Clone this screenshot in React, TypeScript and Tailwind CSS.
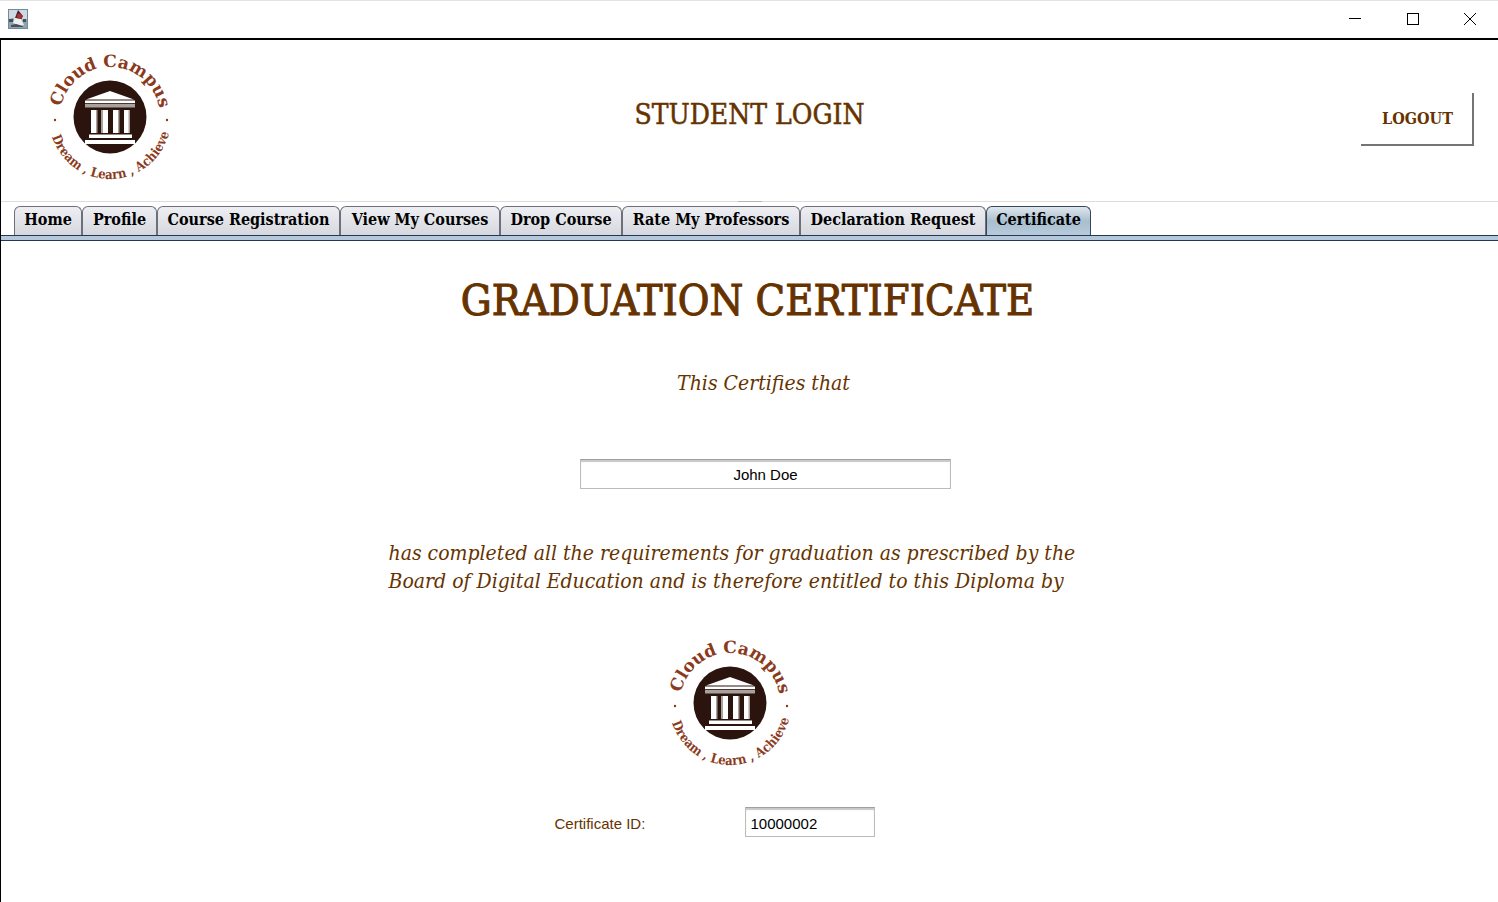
import React, { useId } from "react";

const serif = "font-['DejaVu_Serif_Condensed','DejaVu_Serif',serif]";

const tabs = [
  { label: "Home", width: "w-[68px]" },
  { label: "Profile", width: "w-[75px]" },
  { label: "Course Registration", width: "w-[183px]" },
  { label: "View My Courses", width: "w-[160px]" },
  { label: "Drop Course", width: "w-[122px]" },
  { label: "Rate My Professors", width: "w-[178px]" },
  { label: "Declaration Request", width: "w-[186px]" },
  { label: "Certificate", width: "w-[105px]" },
];

function CampusLogo() {
  const id = useId();
  const top = `${id}-top`;
  const bottom = `${id}-bottom`;
  return (
    <svg viewBox="0 0 140 140" className="size-[140px] shrink-0" role="img" aria-label="Cloud Campus">
      <defs>
        <path id={top} d="M 20 70 A 50 50 0 0 1 120 70" />
        <path id={bottom} d="M 9 71 A 61 61 0 0 0 131 71" />
      </defs>
      <text fill="#8b3a1c" textAnchor="middle" className="font-['DejaVu_Serif',serif] text-[17px] font-bold">
        <textPath href={`#${top}`} startOffset="50.5%">Cloud Campus</textPath>
      </text>
      <text fill="#8b3a1c" textAnchor="middle" className="font-['DejaVu_Serif_Condensed','DejaVu_Serif',serif] text-[13px] font-bold">
        <textPath href={`#${bottom}`} startOffset="51%">Dream , Learn , Achieve</textPath>
      </text>
      <circle cx="15" cy="73" r="1.2" fill="#8b3a1c" />
      <circle cx="127" cy="73" r="1.2" fill="#8b3a1c" />
      <circle cx="70" cy="70" r="36.5" fill="#2b140d" />
      <path d="M70 44 L94 52.500 H46 Z" fill="#fff" />
      <path d="M45 53.500 H95 V56 H45 Z" fill="#fff" />
      <path d="M45 56.800 H95 V60.500 H45 Z" fill="#aaa09c" />
      <path d="M51 63 H57 V86 H51 Z M62 63 H68 V86 H62 Z M73 63 H79 V86 H73 Z M84 63 H90 V86 H84 Z" fill="#fff" />
      <path d="M56 63 H57.500 V86 H56 Z M61 63 H63 V86 H61 Z M78 63 H79.500 V86 H78 Z M88.500 63 H90 V86 H88.500 Z" fill="#aaa09c" />
      <path d="M49 87.500 H92 V91 H49 Z M45 93 H95 V97 H45 Z" fill="#fff" />
    </svg>
  );
}

function AppIcon() {
  return (
    <svg viewBox="0 0 20 20" className="size-5" aria-hidden="true">
      <rect width="20" height="20" fill="#6f8a9e" />
      <rect x="1" y="1" width="18" height="18" fill="#cfdae2" />
      <path d="M1 10 L5 9 L8 12 L13 12 L15 10 L19 10 V19 H1 Z" fill="#93a3ac" />
      <path d="M10 1 L15 7 L13 11 L7 9 Z" fill="#3b2c31" />
      <path d="M7 9 L13 10 L16 16 L13 17 L5 14 Z" fill="#eef0f0" />
      <circle cx="11.500" cy="7" r="2.600" fill="#b02e33" />
      <path d="M1 10 H5 V13 H1 Z M15 10 H18 V13 H15 Z M3 16 L8 15 L15 17 V18 H3 Z" fill="#46515a" />
    </svg>
  );
}

export default function App() {
  return (
    <div className="flex min-h-screen flex-col bg-white text-[#663300]">
      <div className="flex h-10 items-center justify-between border-t border-b-2 border-t-[#e3e3e3] border-b-black pb-px pl-2">
        <AppIcon />
        <div className="flex text-black">
          <button aria-label="Minimize" className="flex h-9 w-[58px] items-center justify-center">
            <svg viewBox="0 0 12 12" className="size-3" shapeRendering="crispEdges"><path d="M0 5.500 H12" stroke="currentColor" /></svg>
          </button>
          <button aria-label="Maximize" className="flex h-9 w-[58px] items-center justify-center">
            <svg viewBox="0 0 12 12" className="size-3" shapeRendering="crispEdges"><path d="M.5 .5 H11.500 V11.500 H.5 Z" fill="none" stroke="currentColor" /></svg>
          </button>
          <button aria-label="Close" className="flex h-9 w-14 items-center justify-center">
            <svg viewBox="0 0 12 12" className="size-3"><path d="M0 0 L12 12 M12 0 L0 12" stroke="currentColor" /></svg>
          </button>
        </div>
      </div>

      <div className="flex grow flex-col border-l border-black">
        <header className="relative grid grid-cols-[1fr_auto_1fr] items-center border-b border-[#dcdcdc] px-6 pb-2">
          <div className="flex h-[153px] items-center pl-[15px]">
            <CampusLogo />
          </div>
          <h1 className={`${serif} -mt-1 text-[28px] leading-8 [-webkit-text-stroke:0.5px]`}>STUDENT LOGIN</h1>
          <button className={`${serif} mt-1.5 h-[53px] w-[113px] justify-self-end border-r-2 border-b-2 border-[#747474] pl-0.5 text-[16px] font-bold`}>
            LOGOUT
          </button>
          <span className="absolute -bottom-px left-1/2 h-px w-6 -translate-x-1/2 bg-[#b4b4b4]" />
        </header>

        <nav role="tablist" className="flex pt-1 pl-[13px]">
          {tabs.map((tab, i) => {
            const active = i === tabs.length - 1;
            return (
              <button
                key={tab.label}
                role="tab"
                aria-selected={active}
                className={`${serif} ${tab.width} flex h-[29px] items-center justify-center rounded-t-md border border-b-0 pb-0.5 text-[16px] leading-5 font-bold whitespace-nowrap text-black ${
                  active
                    ? "border-[#37475a] bg-linear-to-b from-[#dfe7ed] via-[#a9bfd0] to-[#b5cbdc]"
                    : "border-[#6d7078] bg-linear-to-b from-[#eeeff3] to-[#d6d8df]"
                }`}
              >
                {tab.label}
              </button>
            );
          })}
        </nav>
        <div className="h-[6px] border-y border-[#2b3550] bg-[#b4c8dc]" />

        <main className="flex flex-col items-center">
          <h2 className={`${serif} mt-8 mr-1 text-[43px] leading-[54px] [-webkit-text-stroke:1px]`}>GRADUATION CERTIFICATE</h2>
          <p className={`${serif} mt-[42px] ml-7 text-[21px] leading-7 italic`}>This Certifies that</p>
          <input
            aria-label="Student name"
            defaultValue="John Doe"
            className="mt-[62px] ml-8 h-[30px] w-[371px] border border-[#bcbcbc] border-t-[#a0a0a0] text-center font-['Liberation_Sans',sans-serif] text-[15px] text-black shadow-[inset_0_2px_1px_#c8c8c8]"
          />
          <p className={`${serif} mt-[50px] mr-6 w-[698px] text-[21px] leading-7 whitespace-nowrap italic`}>
            has completed all the requirements for graduation as prescribed by the
            <br />
            Board of Digital Education and is therefore entitled to this Diploma by
          </p>
          <div className="mt-[38px] mr-10">
            <CampusLogo />
          </div>
          <div className="mt-[34px] mr-[70px] flex items-center font-['Liberation_Sans',sans-serif] text-[15px]">
            <label htmlFor="certificate-id" className="w-[190px] pt-1">Certificate ID:</label>
            <input
              id="certificate-id"
              defaultValue="10000002"
              className="h-[30px] w-[130px] border border-[#bcbcbc] border-t-[#a0a0a0] px-[5px] pt-0.5 text-black shadow-[inset_0_2px_1px_#c8c8c8]"
            />
          </div>
        </main>
      </div>
    </div>
  );
}
